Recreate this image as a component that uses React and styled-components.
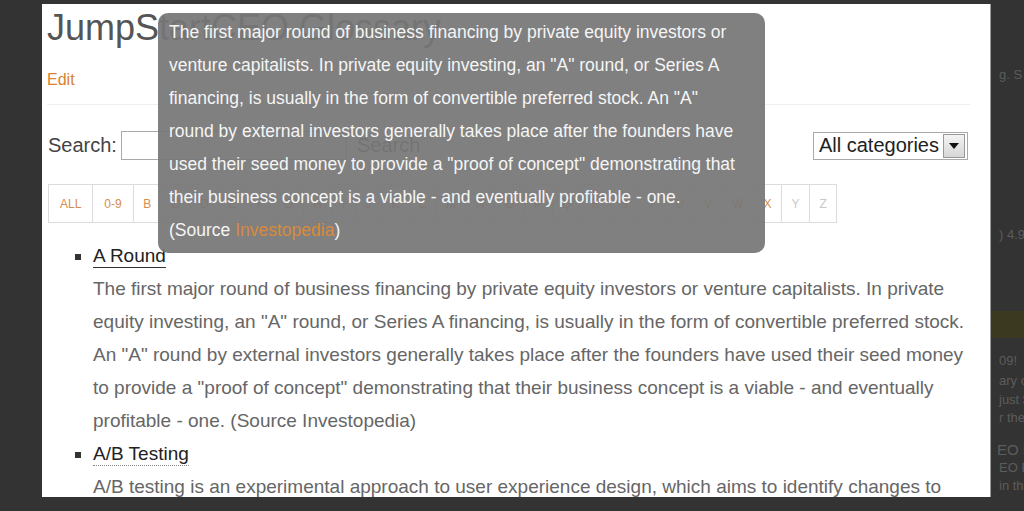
import React from 'react';
import styled, { createGlobalStyle } from 'styled-components';

const GlobalStyle = createGlobalStyle`
  html, body {
    margin: 0;
    padding: 0;
    background: #333333;
    overflow: hidden;
  }
  body {
    font-family: 'Liberation Sans', Arial, sans-serif;
  }
`;

const letters = ['ALL', '0-9', ...'BCDEFGHIJKLMNOPQRSTUVWXYZ'.split('')];
const emptyLetters = ['Y', 'Z'];

const roundText =
  'The first major round of business financing by private equity investors or venture capitalists. In private equity investing, an "A" round, or Series A financing, is usually in the form of convertible preferred stock. An "A" round by external investors generally takes place after the founders have used their seed money to provide a "proof of concept" demonstrating that their business concept is a viable - and eventually profitable - one.';

const Glossary = () => {
  return (
    <>
      <GlobalStyle />
      <Screen>
        <Gutter />
        <Panel>
          <Title>JumpStartCEO Glossary</Title>
          <EditLink>Edit</EditLink>
          <Rule />

          <Toolbar>
            <SearchForm>
              <Label>Search:</Label>
              <SearchInput />
              <SearchButton>Search</SearchButton>
            </SearchForm>
            <Select>
              <span>All categories</span>
              <SelectArrow>
                <svg width="10" height="6" viewBox="0 0 10 6">
                  <path d="M0 0 L10 0 L5 6 Z" fill="#111" />
                </svg>
              </SelectArrow>
            </Select>
          </Toolbar>

          <LetterBar>
            {letters.map((l) => (
              <Letter key={l} $wide={l.length > 1} $empty={emptyLetters.includes(l)}>
                {l}
              </Letter>
            ))}
          </LetterBar>

          <Terms>
            <Term>
              <TermName $active>A Round</TermName>
              <TermText>{roundText} (Source Investopedia)</TermText>
            </Term>
            <Term>
              <TermName>A/B Testing</TermName>
              <TermText>
                A/B testing is an experimental approach to user experience design, which aims to
                identify changes to web pages that increase or maximize an outcome of interest.
              </TermText>
            </Term>
          </Terms>

          <Tooltip>
            {roundText} (Source <Orange>Investopedia</Orange>)
          </Tooltip>
        </Panel>

        <SideColumn>
          <Faded $top={66}>g. S</Faded>
          <Faded $top={142}>) 4.94</Faded>
          <Band />
          <Faded $top={14}>09!&nbsp;&nbsp;S</Faded>
          <Faded $top={2}>ary of</Faded>
          <Faded $top={1}>just $</Faded>
          <Faded $top={0}>r the</Faded>
          <Faded $top={14} $big>EO Pl</Faded>
          <Faded $top={0}>EO Pl</Faded>
          <Faded $top={0}>in the</Faded>
        </SideColumn>
      </Screen>
    </>
  );
};

const Screen = styled.div`
  display: flex;
  height: 511px;
  width: 1024px;
  overflow: hidden;
`;

const Gutter = styled.div`
  width: 42px;
  flex-shrink: 0;
`;

const Panel = styled.main`
  position: relative;
  width: 948px;
  height: 493px;
  margin-top: 4px;
  flex-shrink: 0;
  box-sizing: border-box;
  padding: 0 20px 0 5px;
  background: #fff;
  overflow: hidden;
  box-shadow: 1px 0 0 #9a9a9a;
`;

const Title = styled.h1`
  margin: 4px 0 0;
  font-size: 36px;
  line-height: 40px;
  font-weight: normal;
  color: #555;
`;

const EditLink = styled.a`
  display: block;
  margin-top: 22px;
  font-size: 16px;
  line-height: 20px;
  color: #d9822f;
`;

const Rule = styled.hr`
  margin: 14px 0 0;
  border: 0;
  border-top: 1px solid #efefef;
`;

const Toolbar = styled.div`
  display: flex;
  justify-content: space-between;
  align-items: center;
  margin-top: 26px;
  padding-left: 1px;
`;

const SearchForm = styled.form`
  display: flex;
  align-items: center;
`;

const Label = styled.label`
  font-size: 20px;
  color: #444;
`;

const SearchInput = styled.input`
  width: 226px;
  height: 29px;
  margin-left: 4px;
  box-sizing: border-box;
  border: 1px solid #aaa;
`;

const SearchButton = styled.button`
  margin-left: 10px;
  padding: 0;
  border: 0;
  background: none;
  font-family: inherit;
  font-size: 20px;
  color: #555;
`;

const Select = styled.div`
  display: flex;
  align-items: center;
  gap: 4px;
  height: 28px;
  box-sizing: border-box;
  padding: 0 2px 0 5px;
  margin-right: 2px;
  border: 1px solid #aaa;
  font-size: 20px;
  color: #222;
`;

const SelectArrow = styled.span`
  display: flex;
  align-items: center;
  justify-content: center;
  width: 20px;
  height: 22px;
  border: 1px solid #999;
  background: linear-gradient(#f4f4f4, #d6d6d6);
`;

const LetterBar = styled.nav`
  display: flex;
  margin-top: 24px;
  padding-left: 1px;
`;

const Letter = styled.a`
  display: flex;
  align-items: center;
  height: 39px;
  box-sizing: border-box;
  padding: 0 ${(p) => (p.$wide ? '11px' : '9.5px')};
  border: 1px solid #dcdcdc;
  margin-left: -1px;
  font-size: 12px;
  color: ${(p) => (p.$empty ? '#c8c8c8' : '#d98c4e')};

  &:first-child {
    margin-left: 0;
  }
`;

const Terms = styled.ul`
  margin: 16px 0 0;
  padding-left: 46px;
  list-style: square;
  color: #333;
`;

const Term = styled.li`
  font-size: 19px;
  line-height: 33px;
`;

const TermName = styled.a`
  color: #222;
  border-bottom: 1px ${(p) => (p.$active ? 'solid #333' : 'dotted #888')};
  line-height: 22px;
  display: inline-block;
`;

const TermText = styled.p`
  margin: 0;
  font-size: 19px;
  line-height: 33px;
  color: #666;
`;

const Tooltip = styled.div`
  position: absolute;
  left: 116px;
  top: 9px;
  width: 607px;
  box-sizing: border-box;
  padding: 3px 24px 6px 11px;
  border-radius: 10px;
  background: rgba(118, 118, 118, 0.93);
  color: #f5f5f5;
  font-size: 17.5px;
  line-height: 33px;
`;

const Orange = styled.span`
  color: #d98a3c;
`;

const SideColumn = styled.aside`
  display: flex;
  flex-direction: column;
  width: 34px;
  flex-shrink: 0;
  overflow: hidden;
  white-space: nowrap;
  color: #5c5c5c;
  font-size: 13px;
  line-height: 18px;
`;

const Faded = styled.div`
  margin-top: ${(p) => p.$top}px;
  padding-left: ${(p) => (p.$big ? 7 : 9)}px;
  font-size: ${(p) => (p.$big ? 15 : 13)}px;
`;

const Band = styled.div`
  height: 27px;
  margin-top: 67px;
  background: #3b3920;
`;

export default Glossary;
